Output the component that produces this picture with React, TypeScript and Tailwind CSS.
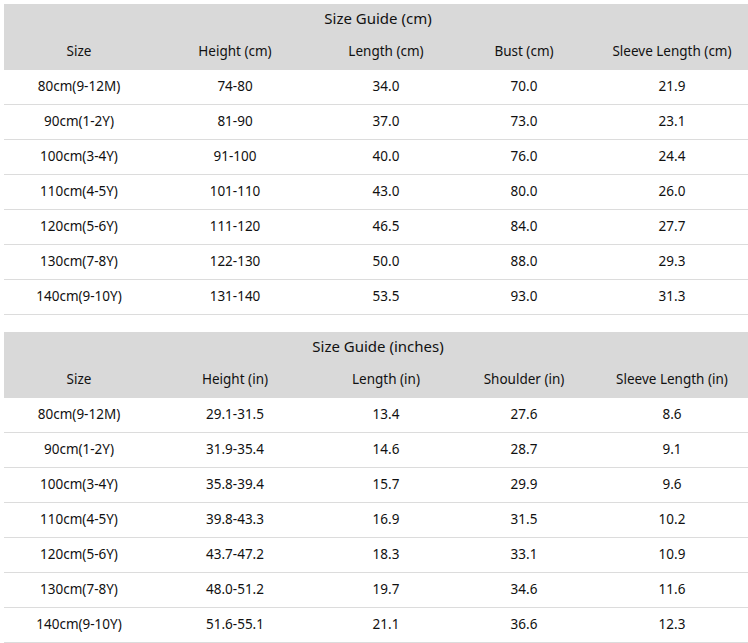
interface GuideProps {
  title: string;
  headers: string[];
  rows: string[][];
}

// fixed column widths, the sheet is wider than the window and gets cut on the right
const grid = 'grid grid-cols-[150px_162px_140px_136px_160px] items-center text-center';

function SizeTable({ title, headers, rows }: GuideProps) {
  return (
    <div className="w-[748px] text-[13.5px] text-[#111]">
      <div className="bg-[#d9d9d9]">
        <div className="h-[29px] flex items-center justify-center text-[15px] pb-[1px]">{title}</div>
        <div className={`${grid} h-[37px]`}>
          {headers.map((h) => (
            <div key={h}>{h}</div>
          ))}
        </div>
      </div>
      {rows.map((r) => (
        <div key={r[0]} className={`${grid} h-[35px] border-b border-[#dcdcdc] pb-[1px]`}>
          {r.map((c, i) => (
            <div key={i}>{c}</div>
          ))}
        </div>
      ))}
    </div>
  );
}

const cmRows = [
  ['80cm(9-12M)', '74-80', '34.0', '70.0', '21.9'],
  ['90cm(1-2Y)', '81-90', '37.0', '73.0', '23.1'],
  ['100cm(3-4Y)', '91-100', '40.0', '76.0', '24.4'],
  ['110cm(4-5Y)', '101-110', '43.0', '80.0', '26.0'],
  ['120cm(5-6Y)', '111-120', '46.5', '84.0', '27.7'],
  ['130cm(7-8Y)', '122-130', '50.0', '88.0', '29.3'],
  ['140cm(9-10Y)', '131-140', '53.5', '93.0', '31.3'],
];

const inRows = [
  ['80cm(9-12M)', '29.1-31.5', '13.4', '27.6', '8.6'],
  ['90cm(1-2Y)', '31.9-35.4', '14.6', '28.7', '9.1'],
  ['100cm(3-4Y)', '35.8-39.4', '15.7', '29.9', '9.6'],
  ['110cm(4-5Y)', '39.8-43.3', '16.9', '31.5', '10.2'],
  ['120cm(5-6Y)', '43.7-47.2', '18.3', '33.1', '10.9'],
  ['130cm(7-8Y)', '48.0-51.2', '19.7', '34.6', '11.6'],
  ['140cm(9-10Y)', '51.6-55.1', '21.1', '36.6', '12.3'],
];

export default function App() {
  return (
    <div className="w-[748px] h-[643px] overflow-hidden bg-white font-['Noto_Sans',sans-serif]">
      <div className="pl-1 pt-1 flex flex-col gap-[17px]">
        <SizeTable
          title="Size Guide (cm)"
          headers={['Size', 'Height (cm)', 'Length (cm)', 'Bust (cm)', 'Sleeve Length (cm)']}
          rows={cmRows}
        />
        <SizeTable
          title="Size Guide (inches)"
          headers={['Size', 'Height (in)', 'Length (in)', 'Shoulder (in)', 'Sleeve Length (in)']}
          rows={inRows}
        />
      </div>
    </div>
  );
}
